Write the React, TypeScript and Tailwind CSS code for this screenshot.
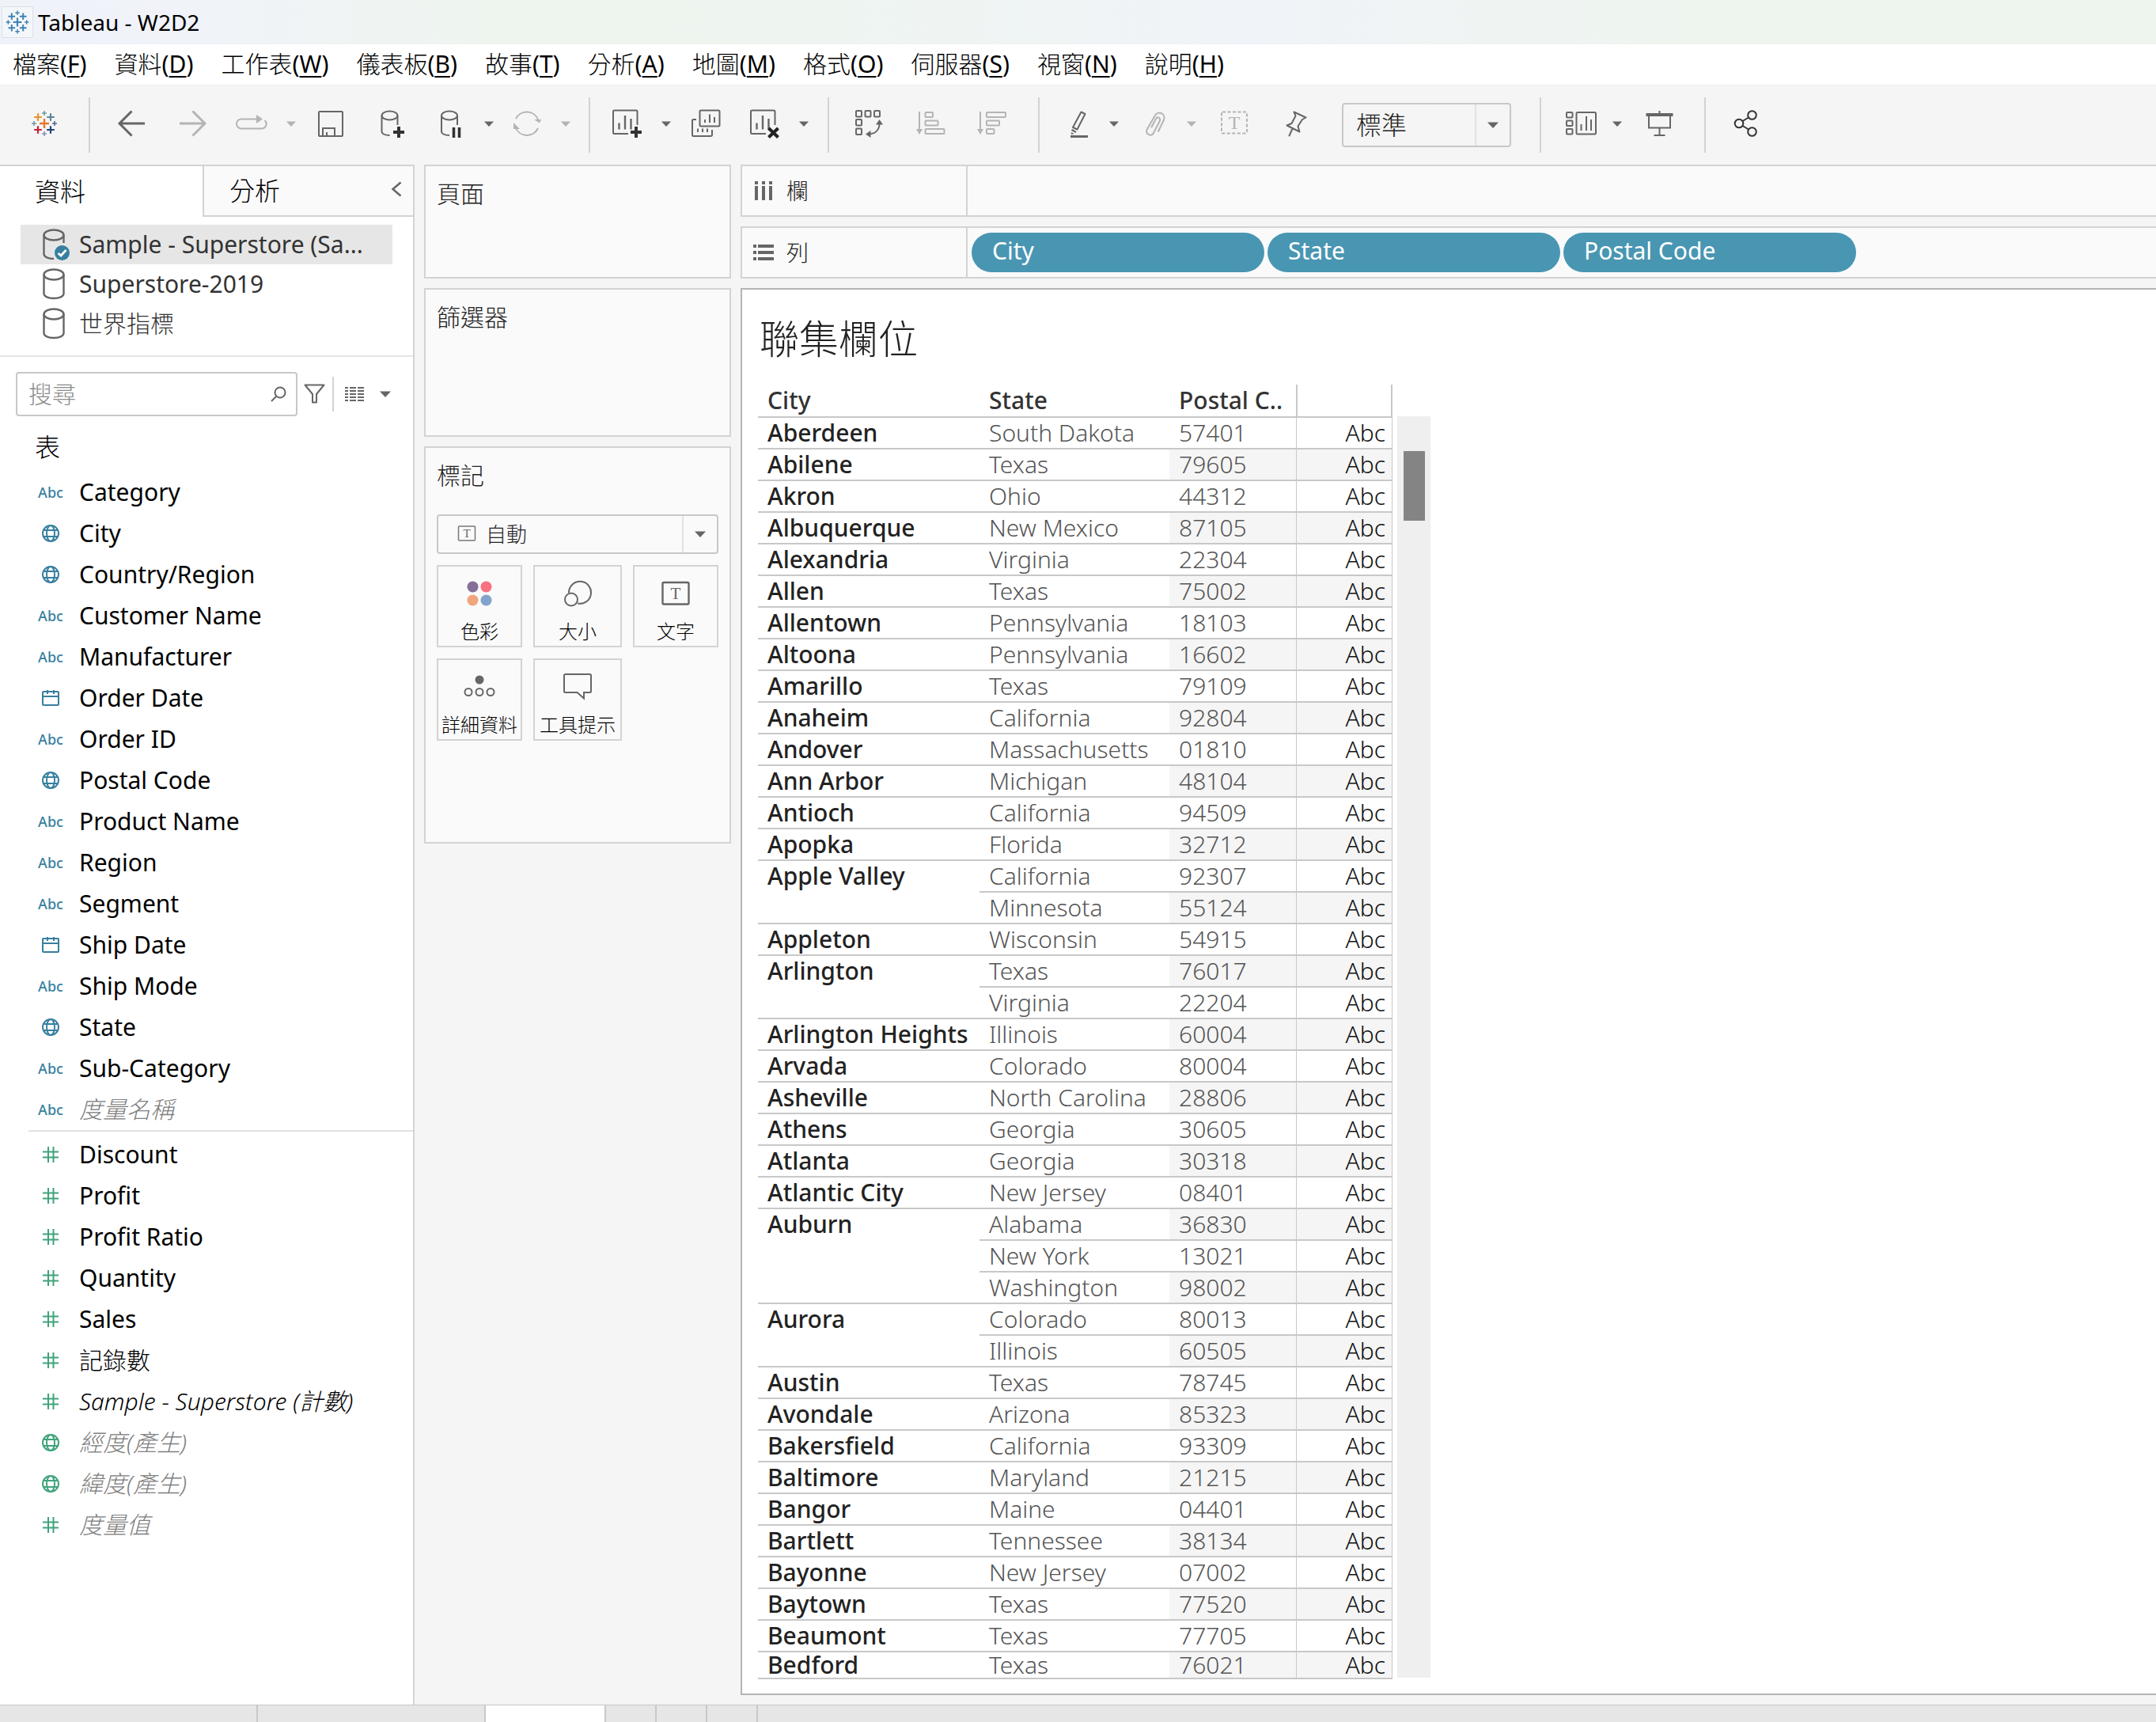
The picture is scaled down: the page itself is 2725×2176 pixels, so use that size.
import React from "react";

type IconProps = { className?: string };

const svgBase = "size-10 fill-none stroke-current";

function Icon({ children, className = "" }: { children: React.ReactNode; className?: string }) {
  return (
    <svg viewBox="0 0 40 40" className={`${svgBase} ${className}`} strokeWidth={2} aria-hidden="true">
      {children}
    </svg>
  );
}

function Plus({ x, y, s, w, c }: { x: number; y: number; s: number; w: number; c: string }) {
  return <path d={`M${x - s} ${y}H${x + s}M${x} ${y - s}V${y + s}`} stroke={c} strokeWidth={w} />;
}

const brandMarks: [number, number, number, number, string][] = [
  [20, 20, 6, 2.4, "#e8762c"],
  [12, 12, 4.8, 2.2, "#eb912c"],
  [28, 12, 4.8, 2.2, "#59879b"],
  [12, 28, 4.8, 2.2, "#c72037"],
  [28, 28, 4.8, 2.2, "#1f447e"],
  [20, 7, 3, 1.6, "#7099a5"],
  [20, 33, 3, 1.6, "#8890b5"],
  [7, 20, 3, 1.6, "#7099a5"],
  [33, 20, 3, 1.6, "#5b6591"],
];

function BrandIcon({ mono = false, className = "size-10" }: { mono?: boolean; className?: string }) {
  return (
    <svg viewBox="0 0 40 40" className={`fill-none ${className}`} aria-hidden="true">
      {brandMarks.map(([x, y, s, w, c]) => (
        <Plus key={`${x}-${y}`} x={x} y={y} s={s} w={w} c={mono ? "#3f83b5" : c} />
      ))}
    </svg>
  );
}

function Caret({ className = "" }: IconProps) {
  return (
    <svg viewBox="0 0 14 8" className={`h-2 w-3.5 fill-current ${className}`} aria-hidden="true">
      <path d="M0 0.500H14L7 8z" />
    </svg>
  );
}

const BackIcon = () => (
  <Icon>
    <path d="M20.500 4.500L5 20l15.500 15.500M5 20h32" strokeWidth={3} />
  </Icon>
);
const ForwardIcon = () => (
  <Icon>
    <path d="M19.500 4.500L35 20 19.500 35.500M35 20H3" strokeWidth={3} />
  </Icon>
);
const LoopIcon = () => (
  <Icon>
    <path d="M26 14.500H7a6 6 0 0 0 0 12h26a6 6 0 0 0 3.500-10.500" />
    <path d="M26 9l8 5.500-8 5.500z" className="fill-current stroke-none" />
  </Icon>
);
const SaveIcon = () => (
  <Icon>
    <rect x="5" y="5" width="30" height="31" rx="1" />
    <path d="M10 36V26h15v10M15 36v-5" />
  </Icon>
);
const DbAddIcon = () => (
  <Icon>
    <ellipse cx="16.500" cy="10" rx="10" ry="5.500" />
    <path d="M6.500 10v20c0 3 4 5 10 5M26.500 10v12" />
    <Plus x={28} y={31} s={7} w={4} c="#333" />
  </Icon>
);
const DbPauseIcon = () => (
  <Icon>
    <ellipse cx="18" cy="10" rx="10" ry="5.500" />
    <path d="M8 10v20c0 3 4 5 10 5M28 10v12" />
    <path d="M23.500 25v13M30.500 25v13" stroke="#333" strokeWidth={3.500} />
  </Icon>
);
const RefreshIcon = () => (
  <Icon>
    <path d="M6 14A15.500 15.500 0 0 1 34.500 16M34 26A15.500 15.500 0 0 1 5.500 25" />
    <path d="M29 15h9l-2 4.500zM3 19v8h8z" className="fill-current stroke-none" />
  </Icon>
);
const SheetAddIcon = () => (
  <Icon>
    <path d="M33.500 22V5a1.500 1.500 0 0 0-1.500-1.500H4.500A1.500 1.500 0 0 0 3 5v26.500A1.500 1.500 0 0 0 4.500 33H22" />
    <path d="M10.500 19.500v8M18 10v17.500M25.500 14v13.500" strokeWidth={2.400} />
    <Plus x={32} y={31} s={7} w={4} c="#333" />
  </Icon>
);
const SheetClearIcon = () => (
  <Icon>
    <path d="M33.500 22V5a1.500 1.500 0 0 0-1.500-1.500H4.500A1.500 1.500 0 0 0 3 5v26.500A1.500 1.500 0 0 0 4.500 33H22" />
    <path d="M10.500 19.500v8M18 10v17.500M25.500 14v13.500" strokeWidth={2.400} />
    <path d="M25.500 26l12 11.500M37.500 26l-12 11.500" stroke="#222" strokeWidth={4} />
  </Icon>
);
const SheetCopyIcon = () => (
  <Icon>
    <rect x="12.500" y="3.500" width="25" height="20" rx="1.500" />
    <path d="M8 15H4.500A1.500 1.500 0 0 0 3 16.500v18A1.500 1.500 0 0 0 4.500 36h22a1.500 1.500 0 0 0 1.500-1.500V28" />
    <path d="M19 15v4M25 8.500V19M31 12v7M10 26.500V31M16 26.500V31M22 26.500V31" />
  </Icon>
);
const SwapIcon = () => (
  <Icon>
    <rect x="4" y="4" width="7" height="7.500" rx="1" />
    <rect x="15.500" y="4" width="7" height="7.500" rx="1" />
    <rect x="27" y="4" width="7" height="7.500" rx="1" />
    <rect x="4" y="15" width="7" height="7.500" rx="1" />
    <rect x="4" y="26.500" width="7" height="7.500" rx="1" />
    <path d="M33.500 20c0 8-5 13-13.500 13.500" />
    <path d="M29 21.500l4.500-6.500 4.500 6.500zM22.500 29v9L16 33.500z" className="fill-current stroke-none" />
  </Icon>
);
const SortAscIcon = () => (
  <Icon>
    <path d="M6 5v24" />
    <path d="M2 27h8l-4 7z" className="fill-current stroke-none" />
    <rect x="13.500" y="6" width="9.500" height="6" rx="1" />
    <rect x="13.500" y="16.500" width="16" height="6" rx="1" />
    <rect x="13.500" y="27" width="24" height="6" rx="1" />
  </Icon>
);
const SortDescIcon = () => (
  <Icon>
    <path d="M5 5v24" />
    <path d="M1 27h8l-4 7z" className="fill-current stroke-none" />
    <rect x="13" y="6" width="24" height="6" rx="1" />
    <rect x="13" y="16.500" width="16" height="6" rx="1" />
    <rect x="13" y="27" width="9.500" height="6" rx="1" />
  </Icon>
);
const HighlightIcon = () => (
  <Icon>
    <path d="M22.500 5.500l5 2.500-10 19.500-5.500-2.500z" strokeLinejoin="round" />
    <path d="M10.500 28l5.500 3" />
    <path d="M10 31l3.500 2-3.500 1z" className="fill-current stroke-none" />
    <path d="M9 36.500h22" strokeWidth={3} />
  </Icon>
);
const ClipIcon = () => (
  <Icon>
    <path
      d="M24 30L31 15.500c3-7.500-7.500-13-11.500-5L9.500 28c-2 5.500 6 9.500 8.500 4L26 16.500c1-4-3.500-5.500-5-2.500L15.500 24.500"
      strokeLinecap="round"
      strokeLinejoin="round"
    />
  </Icon>
);
const TextBoxIcon = () => (
  <Icon>
    <rect x="4" y="5.500" width="32" height="27" rx="1" strokeDasharray="4 2.500" />
    <text x="20" y="27" textAnchor="middle" className="fill-current stroke-none font-[Liberation_Serif,serif] text-[24px]">
      T
    </text>
  </Icon>
);
const PinIcon = () => (
  <Icon>
    <path
      d="M17.500 5.500L32.500 12.500 28 15l-5.500 8.500 2 7L8.500 22.500l6-2.500 5-9.500zM15.500 26.500L11.500 35.500"
      strokeLinejoin="round"
      strokeLinecap="round"
    />
  </Icon>
);
const ShowMeIcon = () => (
  <Icon>
    <rect x="2" y="6" width="7.500" height="6.500" rx="1" />
    <rect x="2" y="16.500" width="7.500" height="6.500" rx="1" />
    <rect x="2" y="27" width="7.500" height="6.500" rx="1" />
    <rect x="14.500" y="6" width="24.500" height="27.500" rx="1.500" />
    <path d="M20.500 21v8M27 11v18M33 15v14" />
  </Icon>
);
const PresentIcon = () => (
  <Icon>
    <path d="M2.500 9h34" strokeWidth={4} />
    <path d="M19.500 4v4M6 11v14.500h27V11M19.500 26v9M12.500 35h14" />
  </Icon>
);
const ShareIcon = () => (
  <Icon>
    <circle cx="12" cy="20" r="5.300" />
    <circle cx="28.500" cy="9.500" r="5.300" />
    <circle cx="28.500" cy="30.500" r="5.300" />
    <path d="M16.500 17l7.500-4.500M16.500 23l7.500 4.500" />
  </Icon>
);

function ToolButton({
  label,
  className = "",
  tone = "text-[#666]",
  children,
}: {
  label: string;
  className?: string;
  tone?: string;
  children: React.ReactNode;
}) {
  return (
    <button
      type="button"
      aria-label={label}
      className={`grid h-11 shrink-0 place-items-center pb-1 ${tone} ${className}`}
    >
      {children}
    </button>
  );
}

const muted = "text-[#b4b4b4]";

function MenuCaret({ className = "w-[60px]", tone }: { className?: string; tone?: string }) {
  return (
    <ToolButton label="更多選項" tone={tone} className={className}>
      <Caret className="h-[7px] w-3" />
    </ToolButton>
  );
}

const Divider = ({ className = "" }: IconProps) => (
  <span className={`h-[70px] w-0.5 shrink-0 bg-[#d3d3d3] ${className}`} />
);

const menus: [string, string][] = [
  ["檔案", "F"],
  ["資料", "D"],
  ["工作表", "W"],
  ["儀表板", "B"],
  ["故事", "T"],
  ["分析", "A"],
  ["地圖", "M"],
  ["格式", "O"],
  ["伺服器", "S"],
  ["視窗", "N"],
  ["說明", "H"],
];

function Toolbar() {
  return (
    <div className="flex h-[101px] shrink-0 items-center border-t border-[#eeeeee] bg-[#f5f5f5]">
      <ToolButton label="開始頁面" className="ml-9">
        <BrandIcon />
      </ToolButton>
      <Divider className="mr-8 ml-9" />
      <ToolButton label="復原"><BackIcon /></ToolButton>
      <ToolButton label="取消復原" tone={muted} className="ml-[38px]"><ForwardIcon /></ToolButton>
      <ToolButton label="重播動畫" tone={muted} className="ml-[34px]"><LoopIcon /></ToolButton>
      <MenuCaret tone={muted} />
      <ToolButton label="儲存"><SaveIcon /></ToolButton>
      <ToolButton label="新增資料來源" className="ml-[38px]"><DbAddIcon /></ToolButton>
      <ToolButton label="暫停自動更新" className="ml-[34px]"><DbPauseIcon /></ToolButton>
      <MenuCaret className="w-14" />
      <ToolButton label="執行更新" tone={muted}><RefreshIcon /></ToolButton>
      <MenuCaret tone={muted} className="w-[58px]" />
      <Divider className="mr-[26px]" />
      <ToolButton label="新工作表"><SheetAddIcon /></ToolButton>
      <MenuCaret />
      <ToolButton label="複製"><SheetCopyIcon /></ToolButton>
      <ToolButton label="清除工作表" className="ml-[34px]"><SheetClearIcon /></ToolButton>
      <MenuCaret />
      <Divider className="mr-[30px]" />
      <ToolButton label="交換列和欄"><SwapIcon /></ToolButton>
      <ToolButton label="遞增排序" tone={muted} className="ml-[38px]"><SortAscIcon /></ToolButton>
      <ToolButton label="遞減排序" tone={muted} className="ml-[38px]"><SortDescIcon /></ToolButton>
      <Divider className="mr-[30px] ml-[38px]" />
      <ToolButton label="醒目提示"><HighlightIcon /></ToolButton>
      <MenuCaret className="w-14 pr-2" />
      <ToolButton label="群組成員" tone={muted}><ClipIcon /></ToolButton>
      <MenuCaret tone={muted} className="w-[60px] pr-2" />
      <ToolButton label="顯示標記標籤" tone={muted}><TextBoxIcon /></ToolButton>
      <ToolButton label="固定軸" className="ml-[38px]"><PinIcon /></ToolButton>
      <div className="relative ml-[38px] h-14 w-[214px] shrink-0">
        <select
          aria-label="檢視大小"
          className="size-full appearance-none rounded border-2 border-[#c8c8c8] bg-[#f5f5f5] pl-4 text-[32px] leading-[48px] font-light text-[#222]"
        >
          <option>標準</option>
        </select>
        <span className="pointer-events-none absolute inset-y-0.5 right-0.5 grid w-11 place-items-center border-l-2 border-[#e2e2e2] text-[#666]">
          <Caret />
        </span>
      </div>
      <Divider className="mr-[30px] ml-9" />
      <ToolButton label="顯示"><ShowMeIcon /></ToolButton>
      <MenuCaret className="w-[60px] pr-2" />
      <ToolButton label="簡報模式"><PresentIcon /></ToolButton>
      <Divider className="mr-[30px] ml-9" />
      <ToolButton label="共用" tone="text-[#333]"><ShareIcon /></ToolButton>
    </div>
  );
}

function DatabaseIcon({ checked = false }: { checked?: boolean }) {
  return (
    <svg viewBox="0 0 36 40" className="h-10 w-9 shrink-0 fill-none stroke-[#666]" strokeWidth={2.400} aria-hidden="true">
      <ellipse cx="14" cy="8" rx="12.500" ry="6.500" />
      {checked ? (
        <>
          <path d="M1.500 8v24c0 3.500 5.500 6 12.500 6M26.500 8v10" />
          <circle cx="24.500" cy="30.500" r="9.500" className="fill-[#357f9f] stroke-none" />
          <path d="M19.500 31l3.500 3 6.500-7" stroke="#fff" strokeWidth={2.800} />
        </>
      ) : (
        <path d="M1.500 8v24c0 3.500 5.500 6 12.500 6s12.500-2.500 12.500-6V8" />
      )}
    </svg>
  );
}

function GlobeIcon() {
  return (
    <svg viewBox="0 0 24 24" className="size-6 fill-none stroke-current" strokeWidth={2} aria-hidden="true">
      <circle cx="12" cy="12" r="10" />
      <ellipse cx="12" cy="12" rx="5" ry="10" />
      <path d="M3 8h18M3 16h18" />
    </svg>
  );
}

function CalendarIcon() {
  return (
    <svg viewBox="0 0 24 24" className="size-6 fill-none stroke-current" strokeWidth={2} aria-hidden="true">
      <rect x="2" y="4" width="20" height="17" rx="1" />
      <path d="M2 10h20M8 2v5M16 2v5" />
    </svg>
  );
}

function NumberIcon() {
  return (
    <svg viewBox="0 0 24 24" className="size-6 fill-none stroke-current" strokeWidth={2} aria-hidden="true">
      <path d="M2 8.500h20M2 15.500h20M9 2v20M15.500 2v20" />
    </svg>
  );
}

type Kind = "abc" | "geo" | "date" | "num";
type Tone = "plain" | "cjk" | "italic" | "generated";
type Field = { name: string; kind: Kind; tone?: Tone };

const toneClass: Record<Tone, string> = {
  plain: "text-black",
  cjk: "font-light text-black",
  italic: "font-light text-black italic",
  generated: "font-light text-[#808080] italic",
};

const dimensions: Field[] = [
  { name: "Category", kind: "abc" },
  { name: "City", kind: "geo" },
  { name: "Country/Region", kind: "geo" },
  { name: "Customer Name", kind: "abc" },
  { name: "Manufacturer", kind: "abc" },
  { name: "Order Date", kind: "date" },
  { name: "Order ID", kind: "abc" },
  { name: "Postal Code", kind: "geo" },
  { name: "Product Name", kind: "abc" },
  { name: "Region", kind: "abc" },
  { name: "Segment", kind: "abc" },
  { name: "Ship Date", kind: "date" },
  { name: "Ship Mode", kind: "abc" },
  { name: "State", kind: "geo" },
  { name: "Sub-Category", kind: "abc" },
  { name: "度量名稱", kind: "abc", tone: "generated" },
];

const measures: Field[] = [
  { name: "Discount", kind: "num" },
  { name: "Profit", kind: "num" },
  { name: "Profit Ratio", kind: "num" },
  { name: "Quantity", kind: "num" },
  { name: "Sales", kind: "num" },
  { name: "記錄數", kind: "num", tone: "cjk" },
  { name: "Sample - Superstore (計數)", kind: "num", tone: "italic" },
  { name: "經度(產生)", kind: "geo", tone: "generated" },
  { name: "緯度(產生)", kind: "geo", tone: "generated" },
  { name: "度量值", kind: "num", tone: "generated" },
];

function FieldList({ fields, color }: { fields: Field[]; color: string }) {
  return (
    <ul>
      {fields.map((f) => (
        <li key={f.name} className="flex h-[52px] items-center pl-11">
          <span className={`grid w-10 shrink-0 place-items-center text-lg font-medium ${color}`}>
            {f.kind === "abc" && "Abc"}
            {f.kind === "geo" && <GlobeIcon />}
            {f.kind === "date" && <CalendarIcon />}
            {f.kind === "num" && <NumberIcon />}
          </span>
          <span className={`pl-4 text-[30px] leading-10 whitespace-nowrap ${toneClass[f.tone ?? "plain"]}`}>
            {f.name}
          </span>
        </li>
      ))}
    </ul>
  );
}

function Sidebar() {
  return (
    <aside className="flex w-[524px] shrink-0 flex-col border-t-2 border-r-2 border-[#d3d3d3] bg-white">
      <div className="flex h-16 shrink-0 text-[32px] leading-[60px] font-light text-black" role="tablist">
        <button type="button" role="tab" aria-selected="true" className="w-64 pl-11 text-left">
          資料
        </button>
        <div className="flex flex-1 items-center border-b-2 border-l-2 border-[#d3d3d3] bg-[#fafafa]">
          <button type="button" role="tab" aria-selected="false" className="flex-1 pl-8 text-left">
            分析
          </button>
          <button type="button" aria-label="收合" className="mr-3.5 pb-1">
            <svg viewBox="0 0 14 20" className="h-5 w-3.5 fill-none stroke-[#666]" strokeWidth={2.500}>
              <path d="M12.500 1.500L2.500 10l10 8.500" />
            </svg>
          </button>
        </div>
      </div>

      <ul className="mt-2.5 mr-[26px] ml-[26px] shrink-0 text-[30px] leading-10 text-[#333]">
        <li className="flex h-[50px] items-center gap-2.5 bg-[#e6e6e6] pl-7">
          <DatabaseIcon checked />
          Sample - Superstore (Sa...
        </li>
        <li className="flex h-[50px] items-center gap-2.5 pl-7">
          <DatabaseIcon />
          Superstore-2019
        </li>
        <li className="flex h-[50px] items-center gap-2.5 pl-7 font-light">
          <DatabaseIcon />
          世界指標
        </li>
      </ul>

      <div className="mt-[15px] h-0.5 shrink-0 bg-[#e6e6e6]" />

      <div className="mt-[19px] flex shrink-0 items-center pr-6 pl-5">
        <label className="flex h-14 w-[356px] items-center rounded border-2 border-[#c8c8c8] pr-3 pl-3.5">
          <input
            type="text"
            aria-label="搜尋"
            placeholder="搜尋"
            className="min-w-0 flex-1 text-[30px] leading-10 font-light outline-none placeholder:text-[#8c8c8c]"
          />
          <svg viewBox="0 0 20 20" className="size-5 fill-none stroke-[#666]" strokeWidth={2} aria-hidden="true">
            <circle cx="12" cy="8" r="6.500" />
            <path d="M7.500 12.500L1 19" />
          </svg>
        </label>
        <button type="button" aria-label="篩選" className="ml-2">
          <svg viewBox="0 0 28 28" className="size-7 fill-none stroke-[#666]" strokeWidth={2} aria-hidden="true">
            <path d="M1.500 2.500h24L16 14v10.500l-5 0V14z" strokeLinejoin="round" />
          </svg>
        </button>
        <span className="ml-2 h-11 w-0.5 bg-[#d3d3d3]" />
        <button type="button" aria-label="檢視方式" className="ml-3.5 flex items-center gap-5 text-[#666]">
          <svg viewBox="0 0 24 20" className="h-5 w-6 fill-none stroke-current" strokeWidth={2} aria-hidden="true">
            <path d="M0 2h4M6 2h8M16 2h8M0 6h4M6 6h8M16 6h8M0 10h4M6 10h8M16 10h8M0 14h4M6 14h8M16 14h8M0 18h4M6 18h8M16 18h8" />
          </svg>
          <Caret />
        </button>
      </div>

      <h2 className="mt-[18px] mb-2.5 shrink-0 pl-11 text-[32px] leading-[42px] font-light text-black">表</h2>

      <div className="min-h-0 flex-1 overflow-hidden">
        <FieldList fields={dimensions} color="text-[#387f9f]" />
        <div className="mb-[3px] ml-9 h-0.5 bg-[#e2e2e2]" />
        <FieldList fields={measures} color="text-[#40a37b]" />
      </div>
    </aside>
  );
}

const card = "border-2 border-[#d3d3d3] bg-[#fafafa]";

const ColorMark = () => (
  <Icon>
    <g className="stroke-none">
      <circle cx="11.500" cy="11.500" r="7" fill="#856f98" />
      <circle cx="28.500" cy="11.500" r="7" fill="#f7717f" />
      <circle cx="11.500" cy="28.500" r="7" fill="#f1a57c" />
      <circle cx="28.500" cy="28.500" r="7" fill="#82a4ca" />
    </g>
  </Icon>
);
const SizeMark = () => (
  <Icon>
    <path d="M9 19A14 14 0 1 1 20 32.500" />
    <circle cx="12" cy="27.500" r="8" />
  </Icon>
);
const TextMark = () => (
  <Icon>
    <rect x="3.500" y="6" width="33" height="27.500" rx="1.500" strokeWidth={2.400} />
    <text x="20" y="27" textAnchor="middle" className="fill-current stroke-none font-[Liberation_Serif,serif] text-[21px]">
      T
    </text>
  </Icon>
);
const DetailMark = () => (
  <Icon>
    <circle cx="20" cy="11" r="5.500" className="fill-current stroke-none" />
    <circle cx="6" cy="26.500" r="4.500" />
    <circle cx="20" cy="26.500" r="4.500" />
    <circle cx="34" cy="26.500" r="4.500" />
  </Icon>
);
const TooltipMark = () => (
  <Icon>
    <path d="M4.500 4h31a1.500 1.500 0 0 1 1.500 1.500v20a1.500 1.500 0 0 1-1.500 1.500H28v7.500L19.500 27h-15A1.500 1.500 0 0 1 3 25.500v-20A1.500 1.500 0 0 1 4.500 4z" />
  </Icon>
);

const marks: { label: string; icon: React.ReactNode }[] = [
  { label: "色彩", icon: <ColorMark /> },
  { label: "大小", icon: <SizeMark /> },
  { label: "文字", icon: <TextMark /> },
  { label: "詳細資料", icon: <DetailMark /> },
  { label: "工具提示", icon: <TooltipMark /> },
];

function Cards() {
  return (
    <div className="flex w-[388px] shrink-0 flex-col gap-3 text-[30px] leading-10 font-light text-[#222]">
      <section className={`h-36 px-3.5 pt-[15px] ${card}`}>頁面</section>
      <section className={`h-[188px] px-3.5 pt-[15px] ${card}`}>篩選器</section>
      <section className={`h-[502px] px-3.5 pt-[15px] ${card}`}>
        標記
        <div className="relative mt-[29px] h-[50px]">
          <select
            aria-label="標記類型"
            className="size-full appearance-none rounded border-2 border-[#c8c8c8] bg-[#fafafa] pl-[60px] text-[26px] leading-10 text-[#222]"
          >
            <option>自動</option>
          </select>
          <svg
            viewBox="0 0 24 20"
            className="pointer-events-none absolute top-3.5 left-[26px] h-5 w-6 fill-none stroke-[#787878]"
            strokeWidth={1.500}
            aria-hidden="true"
          >
            <rect x="1.500" y="1" width="21" height="18" rx="1" />
            <text x="12" y="15" textAnchor="middle" className="fill-[#666] stroke-none font-[Liberation_Serif,serif] text-[15px]">
              T
            </text>
          </svg>
          <span className="pointer-events-none absolute inset-y-0.5 right-0.5 grid w-11 place-items-center border-l-2 border-[#e2e2e2] text-[#666]">
            <Caret />
          </span>
        </div>
        <div className="mt-3.5 grid grid-cols-[108px_112px_108px] gap-3.5">
          {marks.map((m) => (
            <button
              key={m.label}
              type="button"
              className="flex h-[104px] flex-col items-center border-2 border-[#d3d3d3] pt-3.5 text-2xl whitespace-nowrap text-black"
            >
              <span className="text-[#666]">{m.icon}</span>
              <span className="mt-3 leading-8">{m.label}</span>
            </button>
          ))}
        </div>
      </section>
    </div>
  );
}

function Shelf({ label, icon, pills }: { label: string; icon: React.ReactNode; pills: string[] }) {
  return (
    <section className="flex h-[66px] shrink-0 border-y-2 border-l-2 border-[#d3d3d3] bg-[#fafafa]">
      <div className="flex w-[285px] shrink-0 items-center gap-4 border-r-2 border-[#d3d3d3] pl-3.5 text-[28px] font-light text-[#222]">
        {icon}
        {label}
      </div>
      <div className="flex flex-1 items-center gap-1 pl-[5px]">
        {pills.map((p) => (
          <button
            key={p}
            type="button"
            className="h-[50px] w-[370px] rounded-full bg-[#4996b2] pb-1 pl-[26px] text-left text-[30px] leading-10 text-white"
          >
            {p}
          </button>
        ))}
      </div>
    </section>
  );
}

const ColumnsIcon = () => (
  <svg viewBox="0 0 26 28" className="h-7 w-[26px] fill-[#666]" aria-hidden="true">
    <path d="M2 2h4v4H2zM11 2h4v4h-4zM20 2h4v4h-4zM2 8h4v18H2zM11 8h4v18h-4zM20 8h4v18h-4z" />
  </svg>
);
const RowsIcon = () => (
  <svg viewBox="0 0 26 28" className="h-7 w-[26px] fill-[#666]" aria-hidden="true">
    <path d="M0 4h4v4H0zM6 4h20v4H6zM0 12h4v4H0zM6 12h20v4H6zM0 20h4v4H0zM6 20h20v4H6z" />
  </svg>
);

type City = { city: string; places: [string, string][] };

const cities: City[] = [
  { city: "Aberdeen", places: [["South Dakota", "57401"]] },
  { city: "Abilene", places: [["Texas", "79605"]] },
  { city: "Akron", places: [["Ohio", "44312"]] },
  { city: "Albuquerque", places: [["New Mexico", "87105"]] },
  { city: "Alexandria", places: [["Virginia", "22304"]] },
  { city: "Allen", places: [["Texas", "75002"]] },
  { city: "Allentown", places: [["Pennsylvania", "18103"]] },
  { city: "Altoona", places: [["Pennsylvania", "16602"]] },
  { city: "Amarillo", places: [["Texas", "79109"]] },
  { city: "Anaheim", places: [["California", "92804"]] },
  { city: "Andover", places: [["Massachusetts", "01810"]] },
  { city: "Ann Arbor", places: [["Michigan", "48104"]] },
  { city: "Antioch", places: [["California", "94509"]] },
  { city: "Apopka", places: [["Florida", "32712"]] },
  { city: "Apple Valley", places: [["California", "92307"], ["Minnesota", "55124"]] },
  { city: "Appleton", places: [["Wisconsin", "54915"]] },
  { city: "Arlington", places: [["Texas", "76017"], ["Virginia", "22204"]] },
  { city: "Arlington Heights", places: [["Illinois", "60004"]] },
  { city: "Arvada", places: [["Colorado", "80004"]] },
  { city: "Asheville", places: [["North Carolina", "28806"]] },
  { city: "Athens", places: [["Georgia", "30605"]] },
  { city: "Atlanta", places: [["Georgia", "30318"]] },
  { city: "Atlantic City", places: [["New Jersey", "08401"]] },
  { city: "Auburn", places: [["Alabama", "36830"], ["New York", "13021"], ["Washington", "98002"]] },
  { city: "Aurora", places: [["Colorado", "80013"], ["Illinois", "60505"]] },
  { city: "Austin", places: [["Texas", "78745"]] },
  { city: "Avondale", places: [["Arizona", "85323"]] },
  { city: "Bakersfield", places: [["California", "93309"]] },
  { city: "Baltimore", places: [["Maryland", "21215"]] },
  { city: "Bangor", places: [["Maine", "04401"]] },
  { city: "Bartlett", places: [["Tennessee", "38134"]] },
  { city: "Bayonne", places: [["New Jersey", "07002"]] },
  { city: "Baytown", places: [["Texas", "77520"]] },
  { city: "Beaumont", places: [["Texas", "77705"]] },
  { city: "Bedford", places: [["Texas", "76021"]] },
];

const rows = cities.flatMap((c) =>
  c.places.map(([state, zip], i) => ({ city: c.city, span: i === 0 ? c.places.length : 0, state, zip })),
);

function CrossTab() {
  return (
    <div className="w-[802px] shrink-0">
      <table className="w-full table-fixed border-separate border-spacing-0 text-[30px] leading-[38px] whitespace-nowrap">
        <colgroup>
          <col className="w-[280px]" />
          <col className="w-[240px]" />
          <col className="w-[160px]" />
          <col className="w-[122px]" />
        </colgroup>
        <thead>
          <tr className="h-[42px] text-left text-[#333]">
            <th scope="col" className="border-b-2 border-[#c8c8c8] px-3 py-0 font-medium">City</th>
            <th scope="col" className="border-b-2 border-[#c8c8c8] px-3 py-0 font-medium">State</th>
            <th scope="col" className="border-b-2 border-[#c8c8c8] px-3 py-0 font-medium">Postal C..</th>
            <th scope="col" aria-label="值" className="border-x-2 border-b-2 border-[#c8c8c8] p-0" />
          </tr>
        </thead>
        <tbody>
          {rows.map((r, i) => {
            const band = i % 2 ? "bg-[#f5f5f5]" : "bg-white";
            const size = i === rows.length - 1 ? "h-[34px] leading-8" : "h-10";
            return (
              <tr key={`${r.city}-${r.state}`} className={size}>
                {r.span > 0 && (
                  <th
                    scope="rowgroup"
                    rowSpan={r.span}
                    className="border-b-2 border-[#c8c8c8] px-3 py-0 text-left align-top font-medium text-[#222]"
                  >
                    {r.city}
                  </th>
                )}
                <td className="border-b-2 border-[#c8c8c8] px-3 py-0 font-light text-[#555]">{r.state}</td>
                <td className={`border-b-2 border-[#c8c8c8] px-3 py-0 font-light text-[#555] ${band}`}>{r.zip}</td>
                <td
                  className={`border-x border-b-2 border-[#c8c8c8] py-0 pr-2 text-right font-light text-[#111] ${band}`}
                >
                  Abc
                </td>
              </tr>
            );
          })}
        </tbody>
      </table>
    </div>
  );
}

function Worksheet() {
  return (
    <main className="flex min-w-0 flex-1 flex-col gap-3 pb-3">
      <Shelf label="欄" icon={<ColumnsIcon />} pills={[]} />
      <Shelf label="列" icon={<RowsIcon />} pills={["City", "State", "Postal Code"]} />
      <section className="flex min-h-0 flex-1 flex-col border-y-2 border-l-2 border-[#b4b4b4] bg-white pt-8 pb-5 pl-5">
        <h1 className="mb-7 shrink-0 pl-0.5 text-[50px] leading-[60px] font-light text-[#222]">聯集欄位</h1>
        <div className="flex min-h-0 flex-1">
          <CrossTab />
          <div className="mt-10 ml-1.5 flex w-[42px] shrink-0 justify-center bg-[#efefef]">
            <div className="mt-11 h-[88px] w-[27px] bg-[#848484]" />
          </div>
        </div>
      </section>
    </main>
  );
}

export default function App() {
  return (
    <div className="flex h-screen flex-col overflow-hidden bg-[#f5f5f5] font-['Noto_Sans','Noto_Sans_CJK_TC',sans-serif]">
      <header className="flex h-14 shrink-0 items-center bg-[linear-gradient(to_right,#f0f2fa_0%,#f0f3f8_10%,#eef5ee_24%,#eef5f0_36%,#f0f3f8_58%,#eef5ee_80%,#eef5ee_100%)] text-[28px] leading-10 text-black">
        <span className="mr-1.5 ml-0.5 grid h-10 w-10 place-items-center border border-[#dcdfe4] bg-[#f4f7fa]">
          <BrandIcon mono className="size-9" />
        </span>
        Tableau - W2D2
      </header>
      <nav className="flex h-[51px] shrink-0 items-center gap-[35px] bg-white pb-0.5 pl-4 text-[30px] leading-10 text-black">
        {menus.map(([name, key]) => (
          <button key={key} type="button" className="whitespace-nowrap">
            <span className="font-light">{name}</span>(
            <span className="underline decoration-2 underline-offset-4">{key}</span>)
          </button>
        ))}
      </nav>
      <Toolbar />
      <div className="flex min-h-0 flex-1 gap-3">
        <Sidebar />
        <Cards />
        <Worksheet />
      </div>
      <footer className="flex h-[22px] shrink-0 border-t border-[#c8c8c8] bg-[#e6e6e6]">
        <div className="w-[326px] border-r-2 border-[#c8c8c8]" />
        <div className="w-[288px] border-r-2 border-[#c8c8c8]" />
        <div className="w-[152px] border-r-2 border-[#c8c8c8] bg-white" />
        <div className="w-16 border-r-2 border-[#c8c8c8]" />
        <div className="w-16 border-r-2 border-[#c8c8c8]" />
        <div className="w-16 border-r-2 border-[#c8c8c8]" />
      </footer>
    </div>
  );
}
